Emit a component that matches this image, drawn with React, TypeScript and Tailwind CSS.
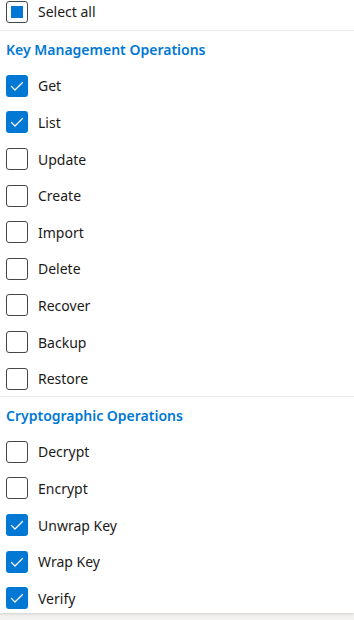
const keyOps = [
  { label: "Get", checked: true },
  { label: "List", checked: true },
  { label: "Update", checked: false },
  { label: "Create", checked: false },
  { label: "Import", checked: false },
  { label: "Delete", checked: false },
  { label: "Recover", checked: false },
  { label: "Backup", checked: false },
  { label: "Restore", checked: false },
];

const cryptoOps = [
  { label: "Decrypt", checked: false },
  { label: "Encrypt", checked: false },
  { label: "Unwrap Key", checked: true },
  { label: "Wrap Key", checked: true },
  { label: "Verify", checked: true },
];

const Box = ({ checked }: { checked: boolean }) =>
  checked ? (
    <span className="flex h-[22px] w-[22px] shrink-0 items-center justify-center rounded-[3px] bg-[#0078d4]">
      <svg width="22" height="22" viewBox="0 0 22 22" fill="none">
        <path d="M5.5 11.5 L9 15 L16.5 7.5" stroke="white" strokeWidth="1.3" strokeLinecap="round" strokeLinejoin="round" />
      </svg>
    </span>
  ) : (
    <span className="h-[22px] w-[22px] shrink-0 rounded-[3px] border border-[#484644]"></span>
  );

const Row = ({ label, checked }: { label: string; checked: boolean }) =>
  <div className="flex h-[36.6px] items-center gap-[10px] px-[6px]">
    <Box checked={checked} />
    <span className="text-[14px] text-[#1b1a19]">{label}</span>
  </div>;

const Heading = ({ children }: { children: string }) =>
  <div className="flex h-[36.6px] items-center px-[6px] text-[14px] font-semibold text-[#0078d4]">{children}</div>;

export default function App() {
  return (
    <div className="h-[620px] w-[354px] bg-[#f3f2f1]" style={{ fontFamily: '"Noto Sans", "Open Sans", sans-serif' }}>
      <div className="h-[613px] overflow-hidden bg-white shadow-[0_1px_3px_rgba(0,0,0,0.15)]">
        <div className="flex h-[30px] items-start gap-[10px] px-[6px] pt-[1px]">
          <span className="flex h-[22px] w-[22px] shrink-0 items-center justify-center rounded-[3px] border border-[#484644]">
            <span className="h-[12px] w-[12px] bg-[#0078d4]"></span>
          </span>
          <span className="text-[14px] leading-[22px] text-[#1b1a19]">Select all</span>
        </div>
        <div className="border-t border-[#edebe9]">
          <Heading>Key Management Operations</Heading>
          {keyOps.map((o) => <Row key={o.label} {...o} />)}
        </div>
        <div className="-mt-px border-t border-[#edebe9]">
          <Heading>Cryptographic Operations</Heading>
          {cryptoOps.map((o) => <Row key={o.label} {...o} />)}
        </div>
      </div>
    </div>
  );
}
